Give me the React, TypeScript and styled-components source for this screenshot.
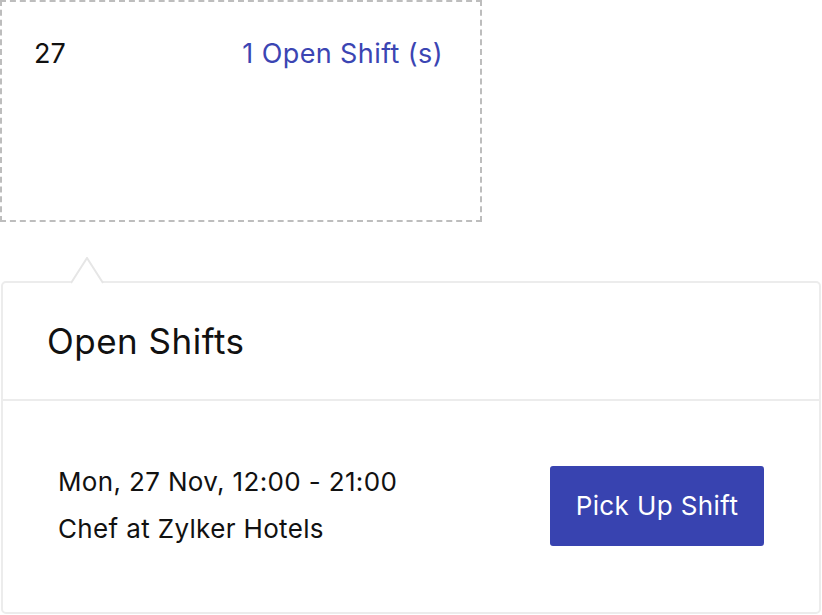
import React from 'react'
import styled, { createGlobalStyle } from 'styled-components'

const GlobalStyle = createGlobalStyle`
  html, body {
    margin: 0;
    padding: 0;
    background: #ffffff;
  }
  body {
    font-family: Inter, 'Open Sans', sans-serif;
    color: #111111;
  }
`

function App() {
  return (
    <Page>
      <GlobalStyle />
      <DayCell>
        <DayNumber>27</DayNumber>
        <OpenCount>1 Open Shift (s)</OpenCount>
      </DayCell>

      <Popover>
        <Arrow width="34" height="27" viewBox="0 0 34 27">
          <path d="M0 26 L16 1 L32 26" fill="#ffffff" stroke="#e6e6e6" strokeWidth="2" />
        </Arrow>
        <PopoverHeader>Open Shifts</PopoverHeader>
        <ShiftRow>
          <ShiftInfo>
            <ShiftLine>Mon, 27 Nov, 12:00 - 21:00</ShiftLine>
            <ShiftLine>Chef at Zylker Hotels</ShiftLine>
          </ShiftInfo>
          <PickButton>Pick Up Shift</PickButton>
        </ShiftRow>
      </Popover>
    </Page>
  )
}

export default App

const Page = styled.div`
  width: 822px;
  height: 615px;
  display: flex;
  flex-direction: column;
  overflow: hidden;
`

const DayCell = styled.div`
  width: 482px;
  height: 222px;
  box-sizing: border-box;
  border: 2px dashed #bdbdbd;
  display: flex;
  align-items: flex-start;
  justify-content: space-between;
  padding: 35px 37px 0 32px;
`

const DayNumber = styled.div`
  font-size: 27px;
  color: #111111;
`

const OpenCount = styled.div`
  font-size: 27px;
  letter-spacing: 0.4px;
  color: #3b45b3;
`

const Popover = styled.div`
  position: relative;
  margin: 59px 0 0 1px;
  width: 820px;
  height: 333px;
  box-sizing: border-box;
  border: 2px solid #ececec;
  border-radius: 5px;
  display: flex;
  flex-direction: column;
`

const Arrow = styled.svg`
  position: absolute;
  top: -26px;
  left: 68px;
`

const PopoverHeader = styled.div`
  height: 118px;
  box-sizing: border-box;
  border-bottom: 2px solid #ececec;
  display: flex;
  align-items: center;
  padding-left: 44px;
  font-size: 35px;
  letter-spacing: 0.5px;
  color: #111111;
`

const ShiftRow = styled.div`
  flex: 1;
  display: flex;
  align-items: center;
  justify-content: space-between;
  padding: 0 55px 2px 55px;
`

const ShiftInfo = styled.div`
  display: flex;
  flex-direction: column;
  gap: 11px;
`

const ShiftLine = styled.div`
  font-size: 26px;
  line-height: 36px;
  letter-spacing: 0.35px;
  color: #111111;
`

const PickButton = styled.button`
  width: 214px;
  height: 80px;
  border: none;
  border-radius: 3px;
  background: #3843b0;
  color: #ffffff;
  font-family: Inter, 'Open Sans', sans-serif;
  font-size: 26px;
  letter-spacing: 0.4px;
  cursor: pointer;
`
